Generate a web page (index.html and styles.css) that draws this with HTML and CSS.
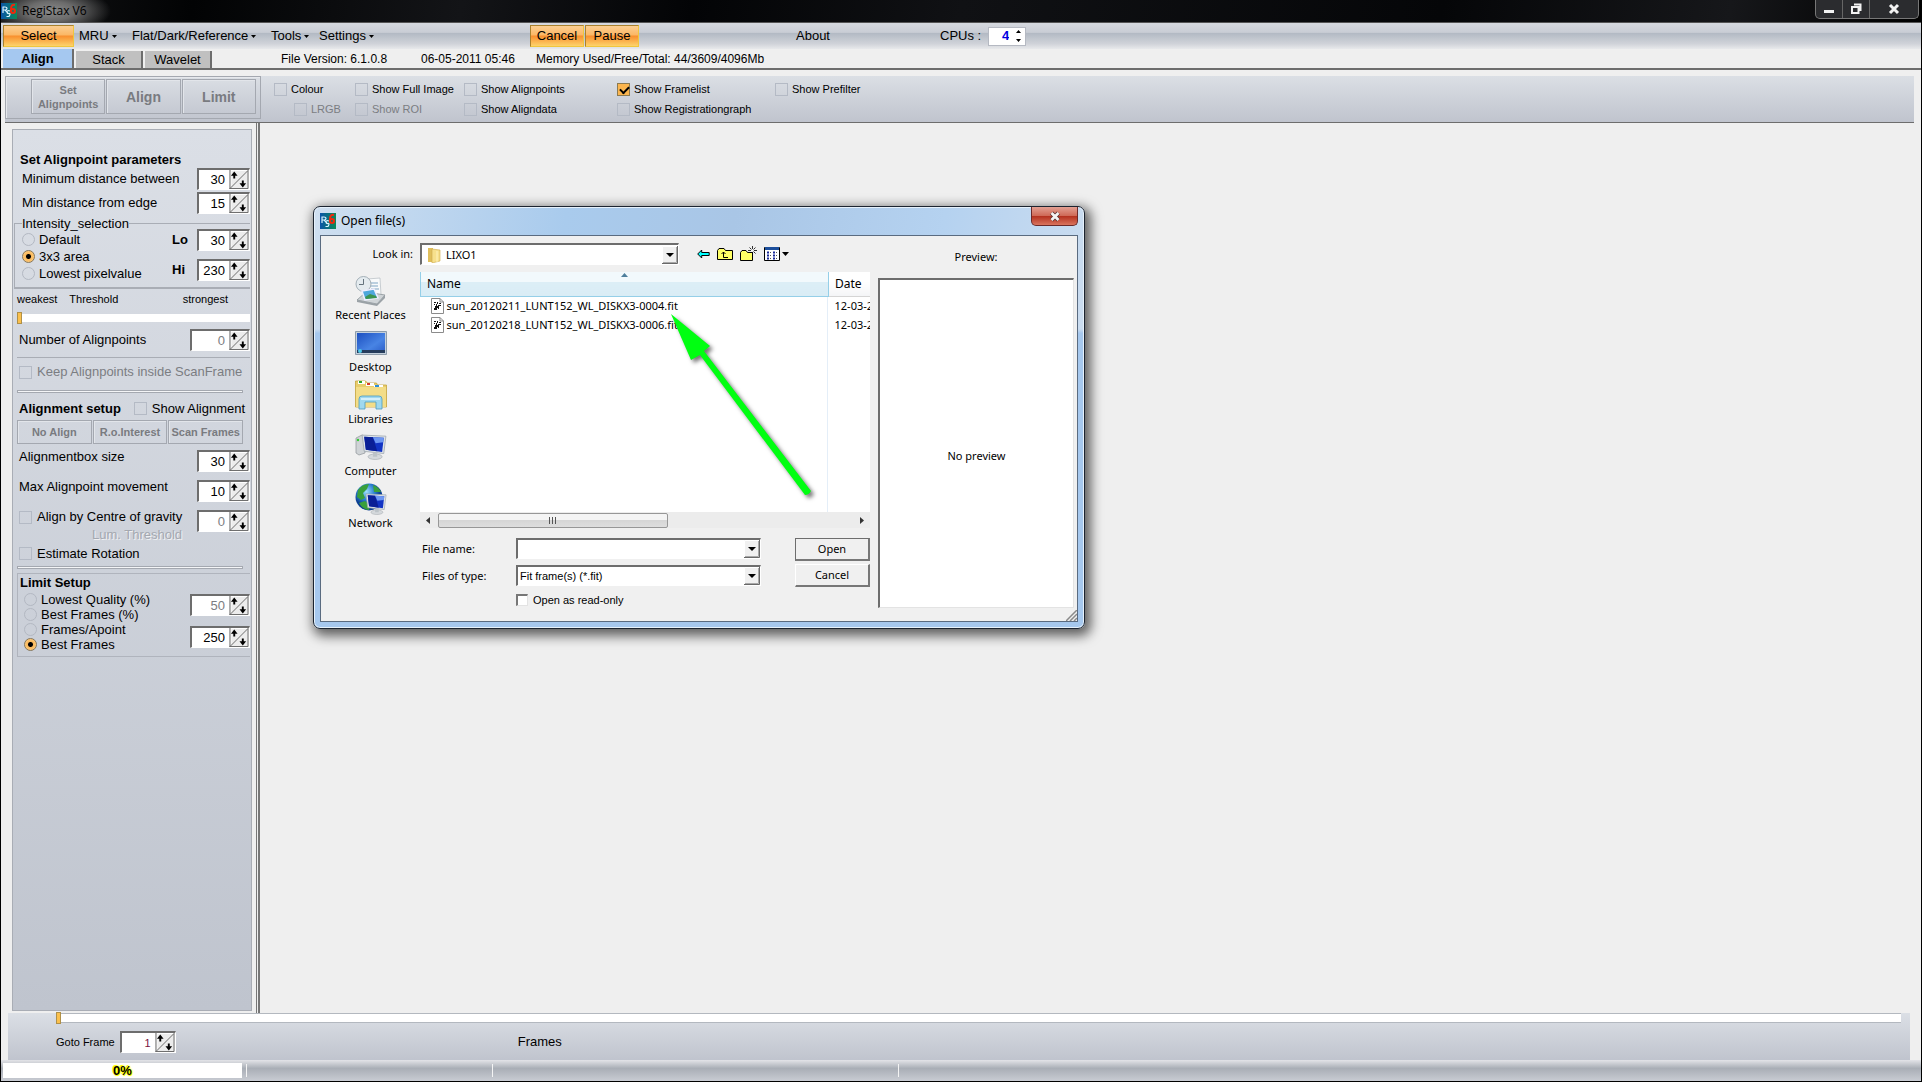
FILE: index.html
```html
<!DOCTYPE html>
<html lang="en">
<head>
  <meta charset="UTF-8" />
  <meta name="viewport" content="width=device-width, initial-scale=1" />
  <title>RegiStax V6</title>
  <link rel="stylesheet" href="styles.css">
</head>
<body>

  <!-- shared icons -->
  <svg class="sprite" aria-hidden="true">
    <symbol id="logo" viewBox="0 0 16 16">
      <linearGradient id="logoBg"><stop offset="0" stop-color="#0a55a8"/><stop offset="1" stop-color="#0a8a58"/></linearGradient>
      <rect width="16" height="16" fill="url(#logoBg)"/>
      <path d="M2 10V4h2q2 0 2 1.500T4 7H2M4 7l3 3M9 8q-3-1-3 1t2 1.500 0 3H5.500" fill="none" stroke="#d8f4ff" stroke-width="1.200"/>
      <path d="M14 2q-4-1-4 4v2q0 2 2 2t2-2-2-2-2 1" fill="none" stroke="#f0280c" stroke-width="2"/>
    </symbol>
    <symbol id="spin" viewBox="0 0 20 20">
      <rect width="20" height="20" fill="#ececec"/>
      <path d="M1.500 19V.5H19" fill="none" stroke="#fff"/>
      <path d="M.5 0v20M19.500 0v19.500H0M1 19L19 1" fill="none" stroke="#666"/>
      <path d="M5 1.500L8.500 6H6v3H4V6H1.500zM14 18.500L10.500 14H13v-3h2v3h2.500z"/>
    </symbol>
    <symbol id="down" viewBox="0 0 16 18">
      <path d="M0 0h16v18H0z" fill="#f0f0f0"/>
      <path d="M.5 17V.5H15" fill="none" stroke="#fff"/>
      <path d="M0 17.500h15.500V0" fill="none" stroke="#696969"/>
      <path d="M1 16.500h13.500V1" fill="none" stroke="#a8a8a8"/>
      <path d="M4 7h8l-4 4z"/>
    </symbol>
    <symbol id="caret" viewBox="0 0 5 3"><path d="M0 0h5L2.500 3z"/></symbol>
    <symbol id="fits" viewBox="0 0 13 16">
      <path d="M.5.5h8.500l3.500 3.500v11.500H.5z" fill="#fff" stroke="#8b8b8b"/>
      <path d="M9 .5V4h3.500" fill="none" stroke="#8b8b8b"/>
      <path d="M3 4h2v1H3zM6 4h1v2H6zM8 5h2v1H8zM3 6h1v1H3zM5 6h1v2H5zM7 7h3v1H7zM4 8h4v2H4zM3 10h3v2H3zM7 10h1v1H7z" fill="#111"/>
    </symbol>
    <symbol id="screen" viewBox="0 0 24 24">
      <path d="M1 1l22 1-2 16-18-2z" fill="#dfe4e8" stroke="#9aa4ac" stroke-width=".7"/>
      <path d="M3 2.500l18 1-1.500 13-15-2z" fill="#1234c4"/>
      <path d="M3 2.500l8 .5 4 13-10.500-1.500z" fill="#0a1f96"/>
      <path d="M11 3l10 .5-.5 4-7 1z" fill="#6d97f2"/>
      <ellipse cx="13" cy="21" rx="6.500" ry="2.500" fill="#d5d9dc" stroke="#a5abb0" stroke-width=".6"/>
      <path d="M11 17h4v4h-4z" fill="#bcc3c8"/>
    </symbol>
  </svg>

  <header class="titlebar">
    <svg class="logo"><use href="#logo"/></svg>
    <span class="app-name">RegiStax V6</span>
    <div class="window-btns">
      <button class="win-btn" aria-label="Minimize"><svg width="12" height="12"><path d="M1 7h10v3H1z" fill="#f2f2f2"/></svg></button>
      <button class="win-btn" aria-label="Restore"><svg width="12" height="12"><path d="M4 1.500h6.500V8M2 4h6.500v6H2z" fill="none" stroke="#f2f2f2" stroke-width="2"/></svg></button>
      <button class="win-btn win-close" aria-label="Close"><svg width="12" height="12"><path d="M2 2l8 8M10 2l-8 8" stroke="#f2f2f2" stroke-width="3"/></svg></button>
    </div>
  </header>

  <nav class="menubar">
    <button class="hot-btn select-btn">Select</button>
    <button class="menu-btn mru">MRU <svg class="caret"><use href="#caret"/></svg></button>
    <button class="menu-btn flat">Flat/Dark/Reference <svg class="caret"><use href="#caret"/></svg></button>
    <button class="menu-btn tools">Tools <svg class="caret"><use href="#caret"/></svg></button>
    <button class="menu-btn settings">Settings <svg class="caret"><use href="#caret"/></svg></button>
    <button class="hot-btn">Cancel</button>
    <button class="hot-btn">Pause</button>
    <button class="menu-btn about">About</button>
    <label for="cpus">CPUs :</label>
    <div class="cpu-box">
      <input type="text" id="cpus" value="4" />
      <svg width="5" height="12"><path d="M0 3h5L2.500 0zM0 9h5l-2.500 3z"/></svg>
    </div>
  </nav>

  <div class="tabs">
    <button class="tab active">Align</button>
    <button class="tab">Stack</button>
    <button class="tab">Wavelet</button>
    <span class="version">File Version: 6.1.0.8</span>
    <span class="date">06-05-2011 05:46</span>
    <span class="memory">Memory Used/Free/Total: 44/3609/4096Mb</span>
  </div>

  <div class="toolbar">
    <div class="steps">
      <button disabled class="step small">Set<br>Alignpoints</button>
      <button disabled class="step">Align</button>
      <button disabled class="step">Limit</button>
    </div>
    <div class="options">
      <div class="option-col c1">
        <label class="check"><input type="checkbox" />Colour</label>
        <label class="check off indent"><input type="checkbox" disabled />LRGB</label>
      </div>
      <div class="option-col c2">
        <label class="check"><input type="checkbox" />Show Full Image</label>
        <label class="check off"><input type="checkbox" disabled />Show ROI</label>
      </div>
      <div class="option-col c3">
        <label class="check"><input type="checkbox" />Show Alignpoints</label>
        <label class="check"><input type="checkbox" />Show Aligndata</label>
      </div>
      <div class="option-col c4">
        <label class="check"><input type="checkbox" checked />Show Framelist</label>
        <label class="check"><input type="checkbox" />Show Registrationgraph</label>
      </div>
      <div class="option-col">
        <label class="check"><input type="checkbox" />Show Prefilter</label>
      </div>
    </div>
  </div>

  <main class="workspace">
    <aside class="sidebar">
      <h2>Set Alignpoint parameters</h2>
      <div class="row">
        <label for="min-dist">Minimum distance between</label>
        <div class="spinner"><input type="text" id="min-dist" value="30" /><svg><use href="#spin"/></svg></div>
      </div>
      <div class="row">
        <label for="min-edge">Min distance from edge</label>
        <div class="spinner"><input type="text" id="min-edge" value="15" /><svg><use href="#spin"/></svg></div>
      </div>

      <fieldset class="intensity">
        <legend>Intensity_selection</legend>
        <div class="radios">
          <label class="radio"><input type="radio" name="intensity" />Default</label>
          <label class="radio"><input type="radio" name="intensity" checked />3x3 area</label>
          <label class="radio"><input type="radio" name="intensity" />Lowest pixelvalue</label>
        </div>
        <div class="levels">
          <div class="level">
            <label for="lo">Lo</label>
            <div class="spinner"><input type="text" id="lo" value="30" /><svg><use href="#spin"/></svg></div>
          </div>
          <div class="level">
            <label for="hi">Hi</label>
            <div class="spinner"><input type="text" id="hi" value="230" /><svg><use href="#spin"/></svg></div>
          </div>
        </div>
      </fieldset>

      <div class="scale"><span>weakest</span><label for="threshold">Threshold</label><span class="strongest">strongest</span></div>
      <input type="range" class="slider" id="threshold" min="0" max="100" value="0" />
      <div class="row count">
        <label for="points">Number of Alignpoints</label>
        <div class="spinner wide"><input type="text" id="points" value="0" disabled /><svg><use href="#spin"/></svg></div>
      </div>
      <label class="check big off keep"><input type="checkbox" disabled />Keep Alignpoints inside ScanFrame</label>
      <hr>

      <div class="setup-head">
        <h2>Alignment setup</h2>
        <label class="check big"><input type="checkbox" />Show Alignment</label>
      </div>
      <div class="modes">
        <button disabled>No Align</button>
        <button disabled>R.o.Interest</button>
        <button disabled>Scan Frames</button>
      </div>
      <div class="row tall">
        <label for="box-size">Alignmentbox size</label>
        <div class="spinner"><input type="text" id="box-size" value="30" /><svg><use href="#spin"/></svg></div>
      </div>
      <div class="row tall">
        <label for="max-move">Max Alignpoint movement</label>
        <div class="spinner"><input type="text" id="max-move" value="10" /><svg><use href="#spin"/></svg></div>
      </div>
      <div class="row tall">
        <label class="check big"><input type="checkbox" />Align by Centre of gravity</label>
        <div class="spinner"><input type="text" id="lum" value="0" disabled /><svg><use href="#spin"/></svg></div>
      </div>
      <label class="lum" for="lum">Lum. Threshold</label>
      <label class="check big rotation"><input type="checkbox" />Estimate Rotation</label>
      <hr>

      <section class="limit">
        <div class="radios">
          <h2>Limit Setup</h2>
          <label class="radio"><input type="radio" name="limit" />Lowest Quality (%)</label>
          <label class="radio"><input type="radio" name="limit" />Best Frames (%)</label>
          <label class="radio"><input type="radio" name="limit" />Frames/Apoint</label>
          <label class="radio"><input type="radio" name="limit" checked />Best Frames</label>
        </div>
        <div class="limit-values">
          <div class="spinner wide"><input type="text" aria-label="Percentage" value="50" disabled /><svg><use href="#spin"/></svg></div>
          <div class="spinner wide"><input type="text" aria-label="Frames" value="250" /><svg><use href="#spin"/></svg></div>
        </div>
      </section>
    </aside>
    <div class="splitter"></div>

    <section class="canvas">
      <div class="dialog" role="dialog" aria-labelledby="dialog-title">
        <div class="dialog-title">
          <svg class="logo"><use href="#logo"/></svg>
          <span id="dialog-title">Open file(s)</span>
          <button class="dialog-close" aria-label="Close"><svg width="12" height="11"><path d="M2.500 2l7 7M9.500 2l-7 7" stroke="#5b3230" stroke-width="4.500"/><path d="M2.500 2l7 7M9.500 2l-7 7" stroke="#f4f4f4" stroke-width="2.800"/></svg></button>
        </div>
        <div class="dialog-body">
          <div class="places">
            <label class="look-label" for="look-in">Look in:</label>
            <button class="place">
              <svg viewBox="0 0 32 32">
                <path d="M12 4l13-1 1 17-12 2z" fill="#f8fafb" stroke="#b4bcc2" stroke-width=".7"/>
                <path d="M15 8h8M15 11h8M16 14h8" stroke="#7fa5c4"/>
                <circle cx="8.500" cy="9" r="7.500" fill="#e4ebef" stroke="#a3afb7"/>
                <path d="M8.500 4v5.500H4" fill="none" stroke="#65737d"/>
                <path d="M2 25l9-8 19 3-8 9z" fill="#cfd4d7" stroke="#8c9499" stroke-width=".8"/>
                <path d="M7 16l12-2 4 9-13 2z" fill="#4ea7dc" stroke="#eef" stroke-width="1.500"/>
                <path d="M10 22l5-3 6 2 1 2-11 1z" fill="#3c9450"/>
                <path d="M2 25l20 4 8-9v3l-8 8-20-4z" fill="#9aa1a6"/>
              </svg>
              Recent Places
            </button>
            <button class="place">
              <svg viewBox="0 0 32 32">
                <linearGradient id="desk" x1="0" y1="0" x2="1" y2="1"><stop offset="0" stop-color="#1c4fc0"/><stop offset=".6" stop-color="#4884e4"/><stop offset="1" stop-color="#2a5cc8"/></linearGradient>
                <path d="M.5 4.500h31v23H.5z" fill="#c3d0dc" stroke="#8d9cab"/>
                <path d="M2 6h28v20H2z" fill="url(#desk)"/>
                <path d="M2 23h28v3H2z" fill="#263c5c"/><circle cx="5" cy="24" r="2" fill="#4fc8e8"/>
              </svg>
              Desktop
            </button>
            <button class="place">
              <svg viewBox="0 0 32 32">
                <path d="M.5 2h10l2 2h9l1 2h9v22H.5z" fill="#e8cd6c" stroke="#c5a33c" stroke-width=".8"/>
                <path d="M3 2h7v3H3z" fill="#fff"/><path d="M4 2h3v2H4z" fill="#2aa52a"/>
                <path d="M11 4h8v3h-8z" fill="#fff"/><path d="M12 4h3v2h-3z" fill="#d83a2a"/>
                <path d="M19 6h9v3h-9z" fill="#fff"/><path d="M20 6h4v2h-4z" fill="#2a8fd8"/>
                <path d="M1 8h30v20H1z" fill="#f3dd88"/>
                <path d="M4 20q0-3 3-3h17q3 0 3 3v10h-6v-7H10v7H4z" fill="#9fd8ee" stroke="#4a9cc0" stroke-width=".8"/>
                <path d="M6 20h19" stroke="#e4f7ff" stroke-width="1.500"/>
              </svg>
              Libraries
            </button>
            <button class="place">
              <svg viewBox="0 0 32 32">
                <path d="M1 7l6-3 3 1v17l-6 2-3-2z" fill="#cfd3d6" stroke="#8e9498" stroke-width=".7"/><circle cx="3" cy="9" r="1.200" fill="#3c3"/>
                <use href="#screen" x="6" y="2" width="26" height="28"/>
              </svg>
              Computer
            </button>
            <button class="place">
              <svg viewBox="0 0 32 32">
                <radialGradient id="globe" cx=".4" cy=".3"><stop offset="0" stop-color="#9fe0ff"/><stop offset=".6" stop-color="#2b7fd0"/><stop offset="1" stop-color="#0c3f92"/></radialGradient>
                <circle cx="14" cy="14" r="13.500" fill="url(#globe)"/>
                <path d="M3 7q4-6 11-6l-2 5-4 4 2 5-4 2-4-3zM4 20l6-2 5 4-1 5q-6 0-10-7zM18 2q6 2 8 7h-7z" fill="#39a03c"/>
                <use href="#screen" x="10" y="9" width="22" height="24"/>
              </svg>
              Network
            </button>
          </div>

          <div class="files">
            <div class="look-row">
              <div class="combo look-combo">
                <svg width="14" height="16"><path d="M1 1h5v14H1z" fill="#e0bf5c"/><path d="M5 2l8 1v11l-8 2z" fill="#f7e08c" stroke="#cda94a" stroke-width=".6"/><path d="M10 4v11" stroke="#fff3bd"/></svg>
                <select id="look-in"><option>LIXO1</option></select>
                <svg class="down"><use href="#down"/></svg>
              </div>
              <button class="tool" aria-label="Back"><svg width="13" height="16"><path d="M.7 8l4-4v2.500h7.500v3H4.700V12z" fill="#0ff" stroke="#000"/></svg></button>
              <button class="tool" aria-label="Up one level"><svg width="16" height="16"><path d="M.5 4.500l1.500-2h5l1.500 2h7v9H.5z" fill="#ff6" stroke="#000"/><path d="M6.500 6v5.500H11M4.500 8l2-2 2 2" fill="none" stroke="#000"/></svg></button>
              <button class="tool" aria-label="New folder"><svg width="17" height="16"><path d="M.5 6.500l1.500-2h4l1.500 2h5v8H.5z" fill="#ff6" stroke="#000"/><path d="M12.500 0v3M12.500 6v3M8 4.500h3M14 4.500h3M9.500 1.500l2 2M15.500 1.500l-2 2M15.500 7.500l-2-2" stroke="#000" stroke-width=".8"/></svg></button>
              <button class="tool" aria-label="View menu"><svg width="26" height="16"><path d="M.5 1.500h15v13H.5z" fill="#fff" stroke="#000"/><path d="M1 1h14v3H1z" fill="#1c4f9c"/><path d="M3 6.500h2M3 9.500h2M3 12.500h2M9 6.500h2M9 9.500h2M9 12.500h2" stroke="#1a2a9a" stroke-width="2"/><path d="M6 6.500h1M6 9.500h1M6 12.500h1M12 6.500h1M12 9.500h1M12 12.500h1" stroke="#555"/><path d="M18 6h7l-3.500 4z"/></svg></button>
            </div>

            <div class="list">
              <div class="list-view">
                <table>
                  <thead>
                    <tr>
                      <th class="name">Name<svg class="sort" width="7" height="4"><path d="M0 4h7L3.500 0z" fill="#4f7f9c"/></svg></th>
                      <th>Date</th>
                    </tr>
                  </thead>
                  <tbody>
                    <tr><td><div class="file"><svg class="fits"><use href="#fits"/></svg>sun_20120211_LUNT152_WL_DISKX3-0004.fit</div></td><td>12-03-2012</td></tr>
                    <tr><td><div class="file"><svg class="fits"><use href="#fits"/></svg>sun_20120218_LUNT152_WL_DISKX3-0006.fit</div></td><td>12-03-2012</td></tr>
                  </tbody>
                </table>
              </div>
              <div class="scrollbar">
                <svg width="8" height="9"><path d="M6 1v7L2 4.500z" fill="#333"/></svg>
                <div class="thumb"><i></i><i></i><i></i></div>
                <svg width="8" height="9"><path d="M2 1v7l4-3.500z" fill="#333"/></svg>
              </div>
            </div>

            <div class="form">
              <div class="fields">
                <div class="field">
                  <label for="file-name">File name:</label>
                  <div class="combo"><input type="text" id="file-name" /><svg class="down"><use href="#down"/></svg></div>
                </div>
                <div class="field">
                  <label for="file-type">Files of type:</label>
                  <div class="combo"><select id="file-type"><option>Fit frame(s) (*.fit)</option></select><svg class="down"><use href="#down"/></svg></div>
                </div>
                <label class="readonly"><input type="checkbox" />Open as read-only</label>
              </div>
              <div class="actions">
                <button class="default">Open</button>
                <button>Cancel</button>
              </div>
            </div>
          </div>

          <div class="preview">
            <span class="preview-label">Preview:</span>
            <div class="preview-box">No preview</div>
          </div>
          <svg class="grip" width="11" height="11"><path d="M0 11L11 0M4 11l7-7M8 11l3-3" stroke="#8a8a8a" stroke-width="1.500"/></svg>
        </div>
        <!-- pointer to the first file -->
        <svg class="arrow" width="150" height="200">
          <path d="M3 3L42 35 36 40 143 180Q141 184 137 184L32 44 23 49z" fill="#0f1"/>
        </svg>
      </div>
    </section>
  </main>

  <footer class="frames">
    <input type="range" class="slider" aria-label="Frame" min="0" max="100" value="0" />
    <div class="frames-row">
      <label for="goto">Goto Frame</label>
      <div class="spinner goto"><input type="text" id="goto" value="1" /><svg><use href="#spin"/></svg></div>
      <span class="frames-label">Frames</span>
    </div>
  </footer>
  <div class="statusbar">
    <div class="progress">0%</div>
    <div class="cell s1"></div>
    <div class="cell s2"></div>
    <div class="cell"></div>
  </div>

</body>
</html>
```
FILE: styles.css
```css
* {
  box-sizing: border-box;
  margin: 0;
  padding: 0;
}

body {
  height: 100vh;
  display: flex;
  flex-direction: column;
  border: 1px solid #000;
  border-top: none;
  background: #efefef;
  font-family: "Liberation Sans", Arial, sans-serif;
  font-size: 13px;
  line-height: 16px;
  color: #000;
  overflow: hidden;
}

button, input, select {
  font: inherit;
  color: inherit;
  background: none;
  border: none;
  border-radius: 0;
  outline: none;
  appearance: none;
}

svg {
  display: block;
  flex: none;
}

label, span, button {
  white-space: nowrap;
}

h2 {
  font-size: 13px;
  line-height: 16px;
  white-space: nowrap;
}

.sprite {
  position: absolute;
  width: 0;
  height: 0;
}

.logo {
  width: 16px;
  height: 16px;
}

/* Title bar */
.titlebar {
  display: flex;
  align-items: center;
  gap: 5px;
  height: 23px;
  border-bottom: 1px solid #555;
  background: radial-gradient(ellipse 60px 24px at 50px 11px, #8a8a8a 0, #6b6b6b 40%, #0000), linear-gradient(100deg, #121315, #020304 10%, #131417 24%, #030406 36%, #101114 50%, #050608 75%, #16171a 90%, #000);
}

.app-name {
  flex: 1;
  font-family: "Open Sans", "Noto Sans", sans-serif;
  font-size: 12px;
}

.window-btns {
  display: flex;
  align-self: flex-start;
  margin-right: 2px;
  border: 1px solid #777;
  border-top: none;
  border-radius: 0 0 5px 5px;
  background: #2b2c2f;
}

.win-btn {
  display: flex;
  align-items: center;
  justify-content: center;
  width: 27px;
  height: 18px;
  border-right: 1px solid #666;
}

.win-close {
  width: 48px;
  border-right: none;
}

/* Menu */
.menubar {
  display: flex;
  align-items: center;
  height: 26px;
  padding-left: 2px;
  background: linear-gradient(#d6d9df, #c9cdd5 36%, #b3bac4 40%, #d0d3d9 80%, #e8e9eb);
}

.hot-btn {
  width: 54px;
  height: 22px;
  border: 1px solid #f0c63c;
  border-top-color: #a9812e;
  border-left-color: #a9812e;
  background: linear-gradient(#fbcf92, #fbb765 45%, #f88f2e 50%, #fdd36b);
}

.hot-btn + .hot-btn {
  margin-left: 1px;
}

.select-btn {
  width: 71px;
}

.menu-btn {
  display: flex;
  align-items: center;
  gap: 3px;
}

.mru { margin-left: 5px; width: 53px; }
.flat { width: 139px; }
.tools { width: 48px; }
.settings { width: 211px; }
.about { margin-left: 157px; width: 144px; }

.caret {
  width: 5px;
  height: 3px;
}

.cpu-box {
  display: flex;
  align-items: center;
  width: 38px;
  height: 19px;
  margin-left: 7px;
  padding-right: 4px;
  border: 1px solid #b5b9c2;
  background: #fff;
}

.cpu-box input {
  flex: 1;
  width: 0;
  padding-right: 7px;
  text-align: right;
  font-weight: bold;
  color: #0000e0;
}

/* Tabs */
.tabs {
  display: flex;
  align-items: flex-end;
  height: 21px;
  padding-left: 2px;
  border-bottom: 2px solid #6d6d6d;
}

.tab {
  width: 67px;
  height: 17px;
  margin-right: 2px;
  border-right: 2px solid #6d6d6d;
  background: #c0c0c0;
}

.tab.active {
  width: 71px;
  height: 19px;
  background: #a5c8f0;
  font-weight: bold;
}

.version, .date, .memory {
  align-self: center;
  font-size: 12px;
}

.version { margin-left: 67px; width: 140px; }
.date { width: 115px; }

/* Toolbar */
.toolbar {
  display: flex;
  align-items: flex-start;
  height: 47px;
  margin: 6px 7px 0 4px;
  border-bottom: 1px solid #6d6d6d;
  background: linear-gradient(#dbdfe5, #c0c4ce);
}

.steps {
  display: flex;
  align-items: center;
  gap: 1px;
  width: 256px;
  height: 43px;
  padding: 0 4px 2px 25px;
  border: 1px solid #a4a8b0;
  box-shadow: inset 1px 1px #e6e8ec;
}

.step {
  flex: 1;
  height: 35px;
  border: 1px solid #a4a8b0;
  box-shadow: inset 1px 1px #e2e5ea;
  font-size: 14px;
  font-weight: bold;
  color: #797b80;
}

.step.small {
  font-size: 11px;
  line-height: 14px;
}

.options {
  display: flex;
  margin-left: 13px;
  padding-top: 5px;
  font-size: 11px;
}

.option-col {
  display: flex;
  flex-direction: column;
  gap: 4px;
}

.c1 { width: 81px; }
.c2 { width: 109px; }
.c3 { width: 153px; }
.c4 { width: 158px; }

.check {
  display: flex;
  align-items: center;
  gap: 4px;
}

.check.big {
  gap: 5px;
}

.check input {
  width: 13px;
  height: 13px;
  border: 1px solid #b4bac5;
}

.check input:checked {
  position: relative;
  border-color: #8c7a50;
  background: #fbb54e;
}

.check input:checked::after {
  content: "";
  position: absolute;
  left: 2px;
  top: 2px;
  width: 7px;
  height: 4px;
  border-left: 2px solid #000;
  border-bottom: 2px solid #000;
  transform: rotate(-45deg);
}

.off {
  color: #7b7d82;
}

.indent {
  margin-left: 20px;
}

/* Main area */
.workspace {
  flex: 1;
  display: flex;
  min-height: 0;
  padding-left: 11px;
}

.sidebar {
  width: 240px;
  margin: 6px 0 2px;
  padding: 22px 1px 0 4px;
  border: 1px solid #a9adb5;
  background: linear-gradient(#dbdfe6, #bfc4ce);
}

.sidebar h2 {
  padding-left: 3px;
}

.splitter {
  width: 8px;
  border-right: 2px solid #777;
  border-left: 4px solid #efefef;
  box-shadow: inset 1px 0 #777;
}

.row {
  display: flex;
  align-items: center;
  justify-content: space-between;
  height: 26px;
  padding-left: 5px;
}

h2 + .row {
  height: 22px;
}

.row.tall {
  height: 30px;
  padding-left: 2px;
}

.row.tall label {
  padding-bottom: 8px;
}

.spinner {
  display: flex;
  width: 53px;
  height: 22px;
  border: 1px solid #fff;
  border-top: 2px solid #6d6d6d;
  border-left: 2px solid #6d6d6d;
  background: #fff;
}

.spinner.wide {
  width: 60px;
}

.spinner input {
  flex: 1;
  width: 0;
  padding-right: 4px;
  text-align: right;
}

.spinner input:disabled {
  color: #7b7d82;
}

.spinner svg {
  width: 20px;
  height: 19px;
}

.intensity {
  display: flex;
  height: 73px;
  margin-left: -3px;
  padding-left: 7px;
  border: 1px solid #a9adb5;
  border-right: none;
  border-bottom: 2px solid #a9adb5;
}

.intensity legend {
  line-height: 15px;
}

.radios {
  flex: 1;
}

.radio {
  display: flex;
  align-items: center;
  gap: 4px;
  height: 17px;
}

.radio input {
  width: 13px;
  height: 13px;
  border: 1px solid #b3b8c2;
  border-radius: 50%;
}

.radio input:checked {
  border-color: #87775a;
  background: radial-gradient(#000 0, #000 2px, #fbb95c 3px, #fdd590);
}

.levels {
  margin-top: -6px;
}

.level {
  display: flex;
  align-items: center;
  justify-content: space-between;
  width: 78px;
  height: 30px;
  font-weight: bold;
}

.level .spinner {
  font-weight: normal;
}

.scale {
  display: flex;
  gap: 12px;
  padding-top: 2px;
  font-size: 11px;
}

.strongest {
  margin-left: auto;
  padding-right: 22px;
}

.slider {
  display: block;
  width: 100%;
  height: 10px;
  background: linear-gradient(#fff, #fff) 0 1px / 100% 8px no-repeat;
}

.slider::-webkit-slider-thumb {
  appearance: none;
  width: 5px;
  height: 12px;
  border: 1px solid #b09048;
  background: #fbc04c;
}

.sidebar .slider {
  margin-top: 6px;
}

.row.count {
  height: 35px;
  padding-left: 2px;
  border-bottom: 1px solid #a9adb5;
}

.keep {
  height: 32px;
  padding: 0 0 4px 2px;
}

hr {
  height: 3px;
  margin-right: 7px;
  border: 1px solid #a4a8b0;
  background: #f4f5f7;
}

.setup-head {
  display: flex;
  align-items: center;
  gap: 13px;
  height: 27px;
  margin-left: -1px;
  padding-top: 4px;
}

.modes {
  display: flex;
  gap: 1px;
  margin: 0 7px 2px 0;
}

.modes button {
  flex: 1;
  height: 24px;
  border: 1px solid #a4a8b0;
  box-shadow: inset 1px 1px #e2e5ea;
  font-size: 11px;
  font-weight: bold;
  color: #797b80;
}

.lum {
  display: block;
  margin-top: -7px;
  padding-left: 75px;
  line-height: 12px;
  color: #a4a8b0;
  text-shadow: 1px 1px #f0f1f3;
}

.rotation {
  height: 25px;
  padding-left: 2px;
}

.limit {
  display: flex;
  height: 84px;
  margin-top: 4px;
  border: 1px solid #b0b4bd;
  border-right: none;
}

.limit .radios {
  padding-left: 6px;
}

.limit h2 {
  margin-left: -7px;
  line-height: 18px;
}

.limit .radio {
  height: 15px;
}

.limit-values {
  display: flex;
  flex-direction: column;
  gap: 10px;
  padding-top: 20px;
}

.canvas {
  flex: 1;
  position: relative;
}

/* Open dialog floats over the canvas */
.dialog {
  position: absolute;
  left: 53px;
  top: 83px;
  width: 772px;
  padding: 0 6px 6px;
  border: 1px solid #1c2430;
  border-radius: 7px;
  background: linear-gradient(#0000 0, #0000 29%, #a6c8ee 30%), linear-gradient(100deg, #cfdff0, #a9cbed 30%, #a9c6e6 50%, #b5d2f0 75%, #d2e0f0);
  box-shadow: inset 0 0 0 1px #e6f1fb, 3px 4px 12px 3px #0009;
  font-family: "Noto Sans", "Open Sans", sans-serif;
  font-size: 11px;
}

.dialog-title {
  display: flex;
  align-items: center;
  gap: 5px;
  height: 28px;
  font-size: 12px;
}

.dialog-close {
  display: flex;
  align-items: center;
  justify-content: center;
  align-self: flex-start;
  width: 47px;
  height: 19px;
  margin-left: auto;
  border: 1px solid #6b2a2a;
  border-top: none;
  border-radius: 0 0 5px 5px;
  background: linear-gradient(#e3a093, #cf6a58 48%, #b32f1d 50%, #d9745e);
}

.dialog-body {
  position: relative;
  display: flex;
  padding: 7px 3px 13px 0;
  border: 1px solid #5a6b80;
  background: #f0f0f0;
}

.places {
  display: flex;
  flex-direction: column;
  width: 99px;
}

.look-label {
  height: 32px;
  padding: 3px 7px 0 0;
  text-align: right;
}

.place {
  display: flex;
  flex-direction: column;
  align-items: center;
  height: 52px;
}

.place svg {
  width: 32px;
  height: 32px;
}

.files {
  width: 450px;
}

.look-row {
  display: flex;
  align-items: center;
  gap: 7px;
  height: 22px;
  margin-bottom: 7px;
}

.combo {
  display: flex;
  align-items: center;
  width: 245px;
  height: 21px;
  border: 1px solid #fff;
  border-top: 2px solid #6d6d6d;
  border-left: 2px solid #6d6d6d;
  background: #fff;
}

.combo input, .combo select {
  flex: 1;
  width: 0;
  padding-left: 2px;
}

.down {
  width: 16px;
  height: 18px;
}

.look-combo {
  width: 259px;
  height: 22px;
  margin-right: 11px;
  padding-left: 5px;
}

.look-combo select {
  padding-left: 5px;
}

.list {
  display: flex;
  flex-direction: column;
  height: 256px;
}

.list-view {
  flex: 1;
  overflow: hidden;
  background: linear-gradient(#e4eef8, #e4eef8) 407px 0 / 1px 100% no-repeat #fff;
}

.list table {
  width: 100%;
  border-collapse: collapse;
  table-layout: fixed;
}

.list th {
  height: 24px;
  padding-left: 6px;
  text-align: left;
  font-size: 12px;
  font-weight: normal;
  border-bottom: 1px solid #d5d5d5;
  background: linear-gradient(#fff 40%, #f4f5f7);
}

.list th.name {
  position: relative;
  width: 408px;
  border: 1px solid #95cfe8;
  border-top: none;
  background: linear-gradient(#f2f9fc 40%, #dceef6 42%, #d9ecf5);
}

.sort {
  position: absolute;
  left: 200px;
  top: 1px;
}

.list td {
  height: 19px;
  padding-left: 6px;
  overflow: hidden;
  white-space: nowrap;
}

.file {
  display: flex;
  align-items: center;
  gap: 3px;
  padding-left: 4px;
}

.fits {
  width: 13px;
  height: 16px;
}

.scrollbar {
  display: flex;
  align-items: center;
  gap: 6px;
  height: 16px;
  padding: 0 4px;
  background: #ececec;
}

.thumb {
  display: flex;
  align-items: center;
  justify-content: center;
  gap: 1px;
  width: 230px;
  height: 15px;
  margin-right: auto;
  border: 1px solid #979797;
  border-radius: 2px;
  background: linear-gradient(#f4f4f4 45%, #d6d6d6 50%, #dedede);
}

.thumb i {
  width: 2px;
  height: 7px;
  border-left: 1px solid #555;
}

.form {
  display: flex;
  justify-content: space-between;
  margin-top: 10px;
}

.fields {
  display: flex;
  flex-direction: column;
  gap: 6px;
}

.field {
  display: flex;
  align-items: center;
}

.field label {
  width: 96px;
  padding-left: 2px;
}

.readonly, #file-type {
  font-family: "Liberation Sans", Arial, sans-serif;
}

.readonly {
  display: flex;
  align-items: center;
  gap: 5px;
  margin-left: 96px;
}

.readonly input {
  width: 12px;
  height: 12px;
  border: 1px solid #e3e3e3;
  border-top: 2px solid #777;
  border-left: 2px solid #777;
  background: #fff;
}

.actions {
  display: flex;
  flex-direction: column;
  gap: 3px;
  width: 75px;
}

.actions button {
  height: 23px;
  border: 1px solid #fff;
  border-right: 2px solid #777;
  border-bottom: 2px solid #777;
}

.actions .default {
  border-top-color: #6d6d6d;
  border-left-color: #6d6d6d;
}

.preview {
  flex: 1;
  display: flex;
  flex-direction: column;
  margin-left: 8px;
  text-align: center;
}

.preview-label {
  height: 35px;
  padding-top: 6px;
}

.preview-box {
  flex: 1;
  display: flex;
  align-items: center;
  justify-content: center;
  padding-top: 24px;
  border: 1px solid #e3e3e3;
  border-top: 2px solid #6d6d6d;
  border-left: 2px solid #6d6d6d;
  background: #fff;
}

.grip {
  position: absolute;
  right: 0;
  bottom: 0;
}

.arrow {
  position: absolute;
  left: 354px;
  top: 104px;
  filter: drop-shadow(3px 3px 2px #0008);
}

/* Frame slider and status */
.frames {
  height: 47px;
  margin: 0 11px 0 7px;
  padding: 0 9px 0 48px;
  background: linear-gradient(#dbdfe5, #c0c4ce);
}

.frames .slider {
  background: linear-gradient(#fff, #fff) 0 1px / 100% 8px no-repeat #b3b8bf;
}

.frames-row {
  display: flex;
  align-items: center;
  height: 38px;
  font-size: 11px;
}

.goto {
  width: 56px;
  margin-left: 5px;
  color: #7a1040;
}

.frames-label {
  margin-left: 342px;
  font-size: 13px;
}

.statusbar {
  display: flex;
  align-items: center;
  height: 21px;
  padding-left: 2px;
  background: linear-gradient(#e3e4e8, #a9aeb6 40%, #c9ccd3);
}

.progress {
  width: 239px;
  height: 15px;
  margin-right: 4px;
  background: #fff;
  line-height: 15px;
  text-align: center;
  font-weight: bold;
  text-shadow: 0 0 2px #ff0, 0 0 2px #ff0, 1px 1px #ff0, -1px -1px #ff0;
}

.cell {
  height: 13px;
  flex: 1;
  border-left: 1px solid #f4f4f4;
}

.s1 { flex: 0 0 246px; }
.s2 { flex: 0 0 406px; }
```
